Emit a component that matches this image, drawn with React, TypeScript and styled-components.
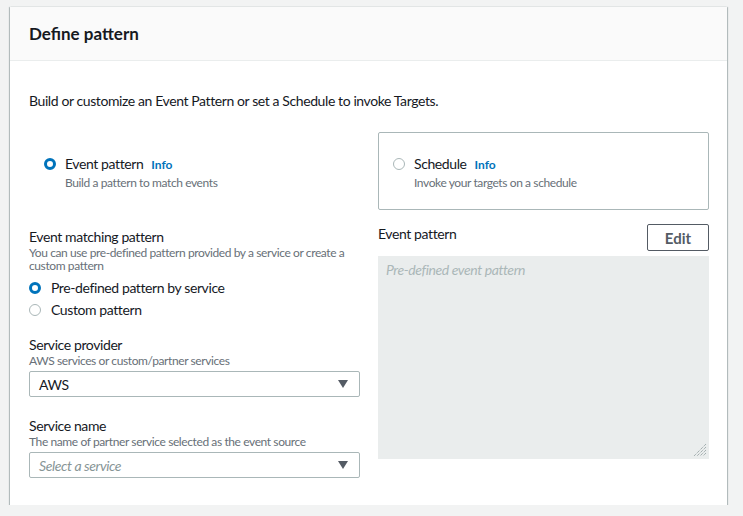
import React from "react";
import styled, { createGlobalStyle } from "styled-components";

const GlobalStyle = createGlobalStyle`
  html, body {
    margin: 0;
    padding: 0;
    background: #f2f3f3;
    font-family: Lato, "Liberation Sans", Arial, sans-serif;
    letter-spacing: -0.4px;
    color: #16191f;
  }
`;

const Page = styled.div`
  padding: 7px 0 0 10px;
  width: 717px;
`;

const Card = styled.section`
  background: #ffffff;
  box-shadow: 0 1px 1px 0 rgba(0, 28, 36, 0.45), 1px 0 1px 0 rgba(0, 28, 36, 0.2),
    -1px 0 1px 0 rgba(0, 28, 36, 0.2);
  padding-bottom: 27px;
`;

const Header = styled.header`
  height: 53px;
  display: flex;
  align-items: center;
  padding: 0 19px;
  background: #fafafa;
  border-bottom: 1px solid #eaeded;
`;

const Title = styled.h2`
  margin: 0;
  font-size: 17px;
  font-weight: 700;
  line-height: 20px;
  letter-spacing: 0;
`;

const Body = styled.div`
  padding: 30px 18px 0 19px;
`;

const Intro = styled.p`
  margin: 0 0 21px;
  font-size: 14px;
  line-height: 20px;
`;

const Columns = styled.div`
  display: grid;
  grid-template-columns: 331px 331px;
  column-gap: 18px;
  align-items: start;
`;

const Tile = styled.div<{ $bordered?: boolean }>`
  box-sizing: border-box;
  height: 78px;
  padding: 21px 14px;
  border: 1px solid ${(p) => (p.$bordered ? "#aab7b8" : "transparent")};
  border-radius: 2px;
  display: flex;
  align-items: flex-start;
  gap: 9px;
`;

const Radio = styled.span<{ $checked?: boolean }>`
  flex: none;
  box-sizing: border-box;
  width: 12px;
  height: 12px;
  margin-top: 4px;
  border-radius: 50%;
  border: ${(p) => (p.$checked ? "3.5px solid #0073bb" : "1px solid #aab7b8")};
  background: #ffffff;
`;

const TileText = styled.div`
  display: flex;
  flex-direction: column;
`;

const TileLabel = styled.div`
  font-size: 14px;
  line-height: 20px;
`;

const Info = styled.a`
  margin-left: 8px;
  font-size: 12px;
  font-weight: 700;
  letter-spacing: 0;
  color: #0073bb;
  text-decoration: none;
`;

const Hint = styled.div`
  font-size: 12px;
  line-height: 13px;
  color: #687078;
`;

const TileHint = styled(Hint)`
  line-height: 16px;
`;

const Lower = styled(Columns)`
  margin-top: 14px;
`;

const LeftCol = styled.div`
  padding-top: 4px;
  display: flex;
  flex-direction: column;
`;

const Field = styled.div<{ $gap?: number }>`
  margin-top: ${(p) => p.$gap ?? 0}px;
  display: flex;
  flex-direction: column;
`;

const Label = styled.div`
  font-size: 14px;
  line-height: 18px;
`;

const OptionList = styled.div`
  margin-top: 6px;
  display: flex;
  flex-direction: column;
  gap: 2px;
`;

const Option = styled.label`
  display: flex;
  align-items: flex-start;
  gap: 10px;
  font-size: 14px;
  line-height: 20px;
`;

const Select = styled.div<{ $placeholder?: boolean }>`
  box-sizing: border-box;
  margin-top: 4px;
  height: 26px;
  padding: 0 11px 0 9px;
  border: 1px solid #aab7b8;
  border-radius: 2px;
  display: flex;
  align-items: center;
  justify-content: space-between;
  font-size: 14px;
  color: ${(p) => (p.$placeholder ? "#879596" : "#16191f")};
  font-style: ${(p) => (p.$placeholder ? "italic" : "normal")};
`;

const Caret = styled.span`
  width: 0;
  height: 0;
  border-left: 5px solid transparent;
  border-right: 5px solid transparent;
  border-top: 8px solid #545b64;
`;

const RightCol = styled.div`
  display: flex;
  flex-direction: column;
`;

const EditorHead = styled.div`
  display: flex;
  justify-content: space-between;
  align-items: flex-start;
`;

const EditorLabel = styled(Label)`
  margin-top: 1px;
`;

const EditButton = styled.button`
  box-sizing: border-box;
  width: 62px;
  height: 27px;
  border: 1px solid #545b64;
  border-radius: 2px;
  background: #ffffff;
  color: #545b64;
  font-family: inherit;
  font-size: 15px;
  font-weight: 700;
  letter-spacing: 0;
  padding: 0;
`;

const Editor = styled.div`
  position: relative;
  margin-top: 5px;
  height: 203px;
  background: #eaeded;
  padding: 6px 8px;
  box-sizing: border-box;
  font-size: 14px;
  line-height: 16px;
  font-style: italic;
  color: #aab7b8;
`;

const Grip = styled.svg`
  position: absolute;
  right: 2px;
  bottom: 2px;
`;

function Choice({ checked, label }: { checked?: boolean; label: string }) {
  return (
    <Option>
      <Radio $checked={checked} />
      {label}
    </Option>
  );
}

export default function App() {
  return (
    <>
      <GlobalStyle />
      <Page>
        <Card>
          <Header>
            <Title>Define pattern</Title>
          </Header>
          <Body>
            <Intro>Build or customize an Event Pattern or set a Schedule to invoke Targets.</Intro>
            <Columns>
              <Tile>
                <Radio $checked />
                <TileText>
                  <TileLabel>
                    Event pattern<Info>Info</Info>
                  </TileLabel>
                  <TileHint>Build a pattern to match events</TileHint>
                </TileText>
              </Tile>
              <Tile $bordered>
                <Radio />
                <TileText>
                  <TileLabel>
                    Schedule<Info>Info</Info>
                  </TileLabel>
                  <TileHint>Invoke your targets on a schedule</TileHint>
                </TileText>
              </Tile>
            </Columns>
            <Lower>
              <LeftCol>
                <Field>
                  <Label>Event matching pattern</Label>
                  <Hint>You can use pre-defined pattern provided by a service or create a custom pattern</Hint>
                  <OptionList>
                    <Choice checked label="Pre-defined pattern by service" />
                    <Choice label="Custom pattern" />
                  </OptionList>
                </Field>
                <Field $gap={16}>
                  <Label>Service provider</Label>
                  <Hint>AWS services or custom/partner services</Hint>
                  <Select>
                    AWS
                    <Caret />
                  </Select>
                </Field>
                <Field $gap={20}>
                  <Label>Service name</Label>
                  <Hint>The name of partner service selected as the event source</Hint>
                  <Select $placeholder>
                    Select a service
                    <Caret />
                  </Select>
                </Field>
              </LeftCol>
              <RightCol>
                <EditorHead>
                  <EditorLabel>Event pattern</EditorLabel>
                  <EditButton>Edit</EditButton>
                </EditorHead>
                <Editor>
                  Pre-defined event pattern
                  <Grip width="14" height="14" viewBox="0 0 14 14">
                    <g stroke="#879596" strokeWidth="1" strokeDasharray="1 1">
                      <line x1="13" y1="1" x2="1" y2="13" />
                      <line x1="13" y1="4" x2="4" y2="13" />
                      <line x1="13" y1="7" x2="7" y2="13" />
                      <line x1="13" y1="10" x2="10" y2="13" />
                    </g>
                  </Grip>
                </Editor>
              </RightCol>
            </Lower>
          </Body>
        </Card>
      </Page>
    </>
  );
}
